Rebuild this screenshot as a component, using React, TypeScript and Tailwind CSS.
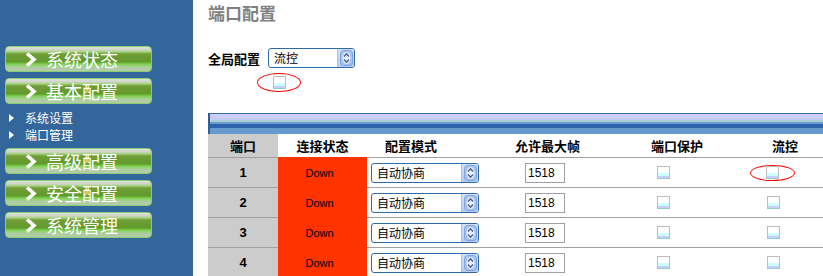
import React from "react";

const CJK = "font-['Noto_Sans_CJK_SC','Noto_Sans',sans-serif]";

function Chevron() {
  return (
    <svg width="12" height="15" viewBox="0 0 12 15" className="shrink-0">
      <path d="M2 1.5 L9 7.5 L2 13.5" fill="none" stroke="#ffffff" strokeWidth="3.6" strokeLinejoin="miter" />
    </svg>
  );
}

function NavButton({ label }: { label: string }) {
  return (
    <div className="h-[26px] w-[147px] rounded-[4px] border border-[#86d06e] bg-[linear-gradient(to_bottom,#e2e2dc_0px,#cfd3c6_3px,#b6d79c_4px,#9fcf78_5px,#6f9d36_7px,#629a2c_15px,#6cbf3a_16px,#8fd468_18px,#a9cf98_20px,#b9c8b2_24px)] flex items-center">
      <div className="ml-[19px] flex items-center">
        <Chevron />
      </div>
      <span className={`${CJK} ml-[9px] text-[18px] leading-none text-white`}>{label}</span>
    </div>
  );
}

function SubItem({ label }: { label: string }) {
  return (
    <div className="h-[17px] flex items-center">
      <span className="ml-[4px] w-0 h-0 border-y-[4px] border-y-transparent border-l-[5px] border-l-white" />
      <span className={`${CJK} ml-[11px] text-[12px] leading-none text-white`}>{label}</span>
    </div>
  );
}

function Spinner() {
  return (
    <div className="w-[17px] h-full flex items-center justify-center bg-[linear-gradient(to_bottom,#d2e2fb,#b4cdf6)] border-l border-[#a9c2ea]">
      <svg width="13" height="16" viewBox="0 0 13 16">
        <rect x="0.5" y="0.5" width="12" height="15" rx="3" fill="#a7c3f0" stroke="#7fa3dd" />
        <ellipse cx="6.5" cy="8" rx="4" ry="6" fill="#e8f0fd" />
        <path d="M4 6.5 L6.5 3.8 L9 6.5" fill="none" stroke="#4b5f8a" strokeWidth="1.4" />
        <path d="M4 9.5 L6.5 12.2 L9 9.5" fill="none" stroke="#4b5f8a" strokeWidth="1.4" />
      </svg>
    </div>
  );
}

function Select({ value, width }: { value: string; width: string }) {
  return (
    <div className={`${width} h-[20px] rounded-[3px] border border-[#2f6aa8] bg-white flex items-stretch overflow-hidden`}>
      <div className={`${CJK} flex-1 flex items-center pl-[5px] text-[12px] text-black leading-none`}>{value}</div>
      <Spinner />
    </div>
  );
}

function Checkbox() {
  return (
    <div className="w-[13px] h-[13px] border border-[#bdbdbd] border-b-[#94cccc] bg-[linear-gradient(to_bottom,#ffffff_0px,#ffffff_6px,#ccffff_6px,#ccffff_9px,#ccccff_9px,#ccccff_11px)]" />
  );
}

function Ellipse({ children, w, h }: { children: React.ReactNode; w: string; h: string }) {
  return (
    <div className={`${w} ${h} rounded-[50%] border border-[#ff0000] flex items-center justify-center`}>
      {children}
    </div>
  );
}

const headerCell = `${CJK} h-full flex items-center text-[13px] font-bold text-black leading-none border-b border-[#a0a0a0]`;

function BodyRow({ n, flowMark }: { n: number; flowMark?: boolean }) {
  return (
    <div className="flex h-[30px]">
      <div className="w-[70px] h-full bg-[#cccccc] border-b border-[#a0a0a0] flex items-center justify-center font-['Liberation_Sans',sans-serif] font-bold text-[13px] text-black">
        {n}
      </div>
      <div className="w-[89px] h-full bg-[#ff3300] flex items-center justify-center pr-[6px] font-['Liberation_Sans',sans-serif] text-[11px] text-black">
        Down
      </div>
      <div className="w-[118px] h-full border-b border-[#a0a0a0] flex items-center pl-[4px]">
        <Select value="自动协商" width="w-[108px]" />
      </div>
      <div className="w-[125px] h-full border-b border-[#a0a0a0] flex items-center pl-[40px]">
        <div className="w-[40px] h-[20px] border border-[#a0a0a0] bg-white flex items-center pl-[2px] font-['Liberation_Sans',sans-serif] text-[12px] text-black leading-none">
          1518
        </div>
      </div>
      <div className="w-[110px] h-full border-b border-[#a0a0a0] flex items-center pl-[47px]">
        <Checkbox />
      </div>
      <div className="flex-1 h-full border-b border-[#a0a0a0] flex items-center">
        {flowMark ? (
          <div className="pl-[30px]">
            <Ellipse w="w-[45px]" h="h-[16px]">
              <Checkbox />
            </Ellipse>
          </div>
        ) : (
          <div className="pl-[47px]">
            <Checkbox />
          </div>
        )}
      </div>
    </div>
  );
}

export default function App() {
  return (
    <div className="flex w-[823px] h-[276px] overflow-hidden bg-white">
      <aside className="w-[193px] shrink-0 bg-[#33669a] pt-[46px] pl-[5px]">
        <NavButton label="系统状态" />
        <div className="mt-[6px]">
          <NavButton label="基本配置" />
        </div>
        <div className="pt-[5px]">
          <SubItem label="系统设置" />
          <SubItem label="端口管理" />
        </div>
        <div className="mt-[5px] flex flex-col gap-[6px]">
          <NavButton label="高级配置" />
          <NavButton label="安全配置" />
          <NavButton label="系统管理" />
        </div>
      </aside>
      <main className="flex-1 pl-[15px] pt-[3px] min-w-0">
        <h1 className={`${CJK} h-[20px] leading-[20px] text-[17px] font-bold text-[#808080]`}>端口配置</h1>
        <div className="mt-[25px] h-[20px] flex items-center">
          <span className={`${CJK} text-[13px] font-bold text-black leading-none`}>全局配置</span>
          <div className="ml-[8px]">
            <Select value="流控" width="w-[87px]" />
          </div>
        </div>
        <div className="mt-[5px] ml-[49px]">
          <Ellipse w="w-[44px]" h="h-[19px]">
            <Checkbox />
          </Ellipse>
        </div>
        <div className="mt-[21px] w-[615px]">
          <div className="h-[21px] border-l-2 border-[#2f5f96] bg-[linear-gradient(to_bottom,#3a6ea5_0px,#3a6ea5_1px,#ccccff_1px,#ccccff_5px,#c3cdf3_5px,#c3cdf3_7px,#a9cfd0_7px,#a9cfd0_9px,#6c9bd0_9px,#6c9bd0_11px,#2e64ac_11px,#2e64ac_15px,#6699cc_15px,#6699cc_21px)]" />
          <div className="flex h-[24px]">
            <div className={`${headerCell} w-[70px] bg-[#cccccc] justify-center`}>端口</div>
            <div className={`${headerCell} w-[89px] justify-center border-b-[#ff3300]`}>连接状态</div>
            <div className={`${headerCell} w-[118px] pl-[18px]`}>配置模式</div>
            <div className={`${headerCell} w-[125px] justify-center`}>允许最大帧</div>
            <div className={`${headerCell} w-[110px] pl-[41px]`}>端口保护</div>
            <div className={`${headerCell} flex-1 pl-[52px]`}>流控</div>
          </div>
          <BodyRow n={1} flowMark />
          <BodyRow n={2} />
          <BodyRow n={3} />
          <BodyRow n={4} />
        </div>
      </main>
    </div>
  );
}
